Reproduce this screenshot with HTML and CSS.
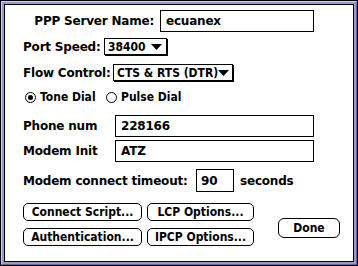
FILE: index.html
```html
<!DOCTYPE html>
<html lang="en">
<head>
    <meta charset="UTF-8">
    <title>PPP Config</title>
    <link rel="stylesheet" href="styles.css">
</head>
<body>

    <div class="window">
        <div class="bevel">
            <div class="dialog">

                <div class="row row-server">
                    <span class="label label-server">PPP Server Name:</span>
                    <div class="field field-server">ecuanex</div>
                </div>

                <div class="row row-popup row-port">
                    <span class="label label-port">Port Speed:</span>
                    <div class="popup popup-port">
                        <span>38400</span>
                        <svg class="arrow" width="11" height="6" viewBox="0 0 11 6"><polygon points="0,0 11,0 5.5,6" fill="#000"/></svg>
                    </div>
                </div>

                <div class="row row-popup row-flow">
                    <span class="label label-flow">Flow Control:</span>
                    <div class="popup popup-flow">
                        <span>CTS &amp; RTS (DTR)</span>
                        <svg class="arrow" width="11" height="6" viewBox="0 0 11 6"><polygon points="0,0 11,0 5.5,6" fill="#000"/></svg>
                    </div>
                </div>

                <div class="row row-radio">
                    <div class="radio radio-tone"><span class="dot checked"></span>Tone Dial</div>
                    <div class="radio"><span class="dot"></span>Pulse Dial</div>
                </div>

                <div class="row row-phone">
                    <span class="label label-field">Phone num</span>
                    <div class="field field-wide">228166</div>
                </div>

                <div class="row row-init">
                    <span class="label label-field">Modem Init</span>
                    <div class="field field-wide">ATZ</div>
                </div>

                <div class="row row-timeout">
                    <span class="label label-timeout">Modem connect timeout:</span>
                    <div class="field field-timeout">90</div>
                    <span class="unit">seconds</span>
                </div>

                <div class="row row-buttons">
                    <div class="button-col col-left">
                        <button class="btn">Connect Script...</button>
                        <button class="btn">Authentication...</button>
                    </div>
                    <div class="button-col col-mid">
                        <button class="btn">LCP Options...</button>
                        <button class="btn">IPCP Options...</button>
                    </div>
                    <button class="btn btn-done">Done</button>
                </div>

            </div>
        </div>
    </div>

</body>
</html>
```

FILE: styles.css
```css
body {
    margin: 0;
    font-family: "DejaVu Sans", sans-serif;
    font-weight: bold;
    font-size: 12px;
    letter-spacing: -0.2px;
    color: #000;
    background: #fff;
}

/* narrower face for the controls, Chicago is tight */
.popup,
.btn,
.radio {
    font-family: "DejaVu Sans Condensed", "DejaVu Sans", sans-serif;
    font-stretch: condensed;
    letter-spacing: 0;
}

/* window frame: black, bevel, black */
.window {
    width: 358px;
    height: 266px;
    box-sizing: border-box;
    border: 1px solid #000;
}
.bevel {
    height: 100%;
    box-sizing: border-box;
    border: 1px solid;
    border-color: #ccccff #666699 #666699 #ccccff;
    background: #9999cc;
    padding: 2px;
}
.dialog {
    height: 100%;
    box-sizing: border-box;
    border: 1px solid #000;
    background: #fff;
    padding-left: 18px;
}

.row {
    display: flex;
    align-items: center;
}
.label {
    white-space: nowrap;
    flex: none;
}

/* text fields */
.field {
    box-sizing: border-box;
    height: 22px;
    border: 1px solid #000;
    padding-left: 5px;
    display: flex;
    align-items: center;
    flex: none;
}

.row-server {
    margin-top: 5px;
    height: 22px;
}
.label-server {
    width: 131px;
    margin-right: 6px;
    text-align: right;
}
.field-server {
    width: 154px;
}

/* popup menus */
.row-popup {
    height: 18px;
}
.row-port {
    margin-top: 6px;
}
.row-flow {
    margin-top: 8px;
}
.label-port {
    width: 81px;
}
.label-flow {
    width: 90px;
}
.popup {
    box-sizing: border-box;
    height: 17px;
    border: 1px solid #000;
    box-shadow: 1px 1px 0 #000;
    padding: 0 4px 0 3px;
    display: flex;
    align-items: center;
    justify-content: space-between;
    align-self: flex-start;
    white-space: nowrap;
}
.popup-port {
    width: 63px;
}
.popup-flow {
    width: 120px;
}
.arrow {
    flex: none;
}

/* radio buttons */
.row-radio {
    margin-top: 7px;
    height: 16px;
}
.radio {
    display: flex;
    align-items: center;
    white-space: nowrap;
}
.radio-tone {
    margin-left: 2px;
    width: 81px;
}
.dot {
    box-sizing: border-box;
    width: 11px;
    height: 11px;
    border: 1px solid #000;
    border-radius: 50%;
    margin-right: 4px;
    display: flex;
    align-items: center;
    justify-content: center;
}
.dot.checked::after {
    content: "";
    width: 5px;
    height: 5px;
    border-radius: 50%;
    background: #000;
}

/* phone / init */
.row-phone {
    margin-top: 10px;
    height: 22px;
}
.row-init {
    margin-top: 3px;
    height: 22px;
}
.label-field {
    width: 92px;
}
.field-wide {
    width: 199px;
}

/* timeout */
.row-timeout {
    margin-top: 7px;
    height: 23px;
}
.label-timeout {
    width: 173px;
}
.field-timeout {
    width: 38px;
    height: 23px;
    padding-left: 4px;
}
.unit {
    margin-left: 6px;
}

/* buttons */
.row-buttons {
    margin-top: 11px;
    align-items: flex-start;
}
.button-col {
    display: flex;
    flex-direction: column;
    gap: 7px;
}
.col-left {
    width: 119px;
}
.col-mid {
    width: 107px;
    margin-left: 5px;
}
.btn {
    box-sizing: border-box;
    height: 18px;
    padding: 0;
    margin: 0;
    border: 1px solid #000;
    border-radius: 5px;
    background: #fff;
    color: #000;
    font-size: 12px;
    font-weight: bold;
    white-space: nowrap;
}
.btn-done {
    width: 62px;
    height: 20px;
    margin-left: 24px;
    margin-top: 15px;
    border-radius: 6px;
}
```
